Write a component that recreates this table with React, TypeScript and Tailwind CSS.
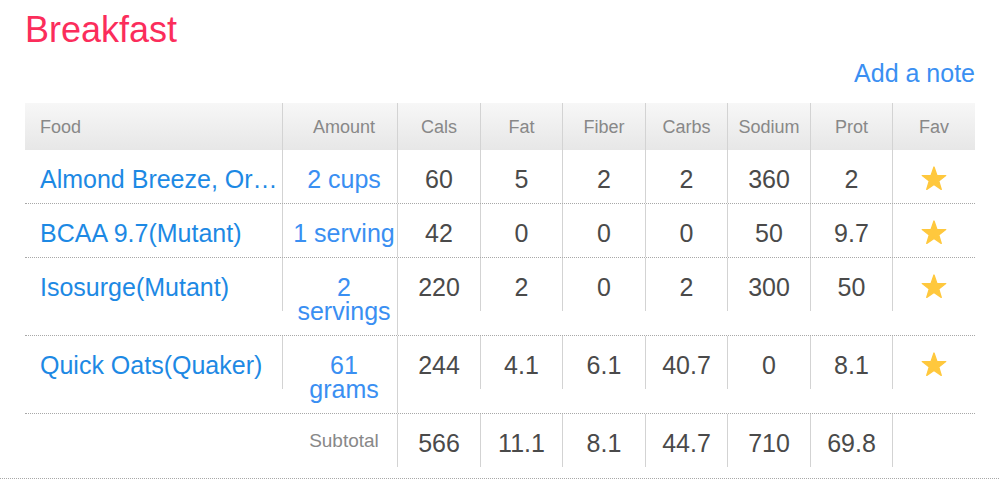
const rows = [
  { food: "Almond Breeze, Original Unsweetened", amount: "2 cups", cals: "60", fat: "5", fiber: "2", carbs: "2", sodium: "360", prot: "2" },
  { food: "BCAA 9.7(Mutant)", amount: "1 serving", cals: "42", fat: "0", fiber: "0", carbs: "0", sodium: "50", prot: "9.7" },
  { food: "Isosurge(Mutant)", amount: "2 servings", cals: "220", fat: "2", fiber: "0", carbs: "2", sodium: "300", prot: "50" },
  { food: "Quick Oats(Quaker)", amount: "61 grams", cals: "244", fat: "4.1", fiber: "6.1", carbs: "40.7", sodium: "0", prot: "8.1" },
];

const totals = ["566", "11.1", "8.1", "44.7", "710", "69.8"];

// widths of the six number columns, Cals..Prot
const numCols = ["w-[83px]", "w-[82px]", "w-[83px]", "w-[82px]", "w-[83px]", "w-[82px]"];
const numHeads = ["Cals", "Fat", "Fiber", "Carbs", "Sodium", "Prot"];

const Star = () => (
  <svg width="28" height="27" viewBox="0 0 24 24">
    <polygon
      points="12,1.8 14.59,9.24 22.46,9.4 16.18,14.16 18.47,21.7 12,17.2 5.53,21.7 7.82,14.16 1.54,9.4 9.41,9.24"
      fill="#ffc83d"
      stroke="#ffc83d"
      strokeWidth="1.2"
      strokeLinejoin="round"
    />
  </svg>
);

export default function App() {
  return (
    <div className="min-h-screen bg-white font-['Liberation_Sans',Arial,sans-serif]">
      <div className="pl-[25px] pr-[24px] pt-[12px]">
        <h1 className="text-[36px] leading-none text-[#fb2d5b]">Breakfast</h1>
        <div className="mt-[13px] flex justify-end">
          <a className="cursor-pointer text-[25px] leading-none text-[#3a8ff2]">Add a note</a>
        </div>

        <div className="mt-[17px]">
          {/* Header */}
          <div className="flex h-[47px] bg-linear-to-b from-[#f7f7f7] to-[#e7e7e7] text-[18px] text-[#888]">
            <div className="flex w-[258px] items-center border-r border-[#d3d3d3] pl-[15px] pt-[2px]">Food</div>
            <div className="flex w-[115px] items-center justify-center border-r border-[#d3d3d3] pl-[8px] pt-[2px]">Amount</div>
            {numHeads.map((h, i) => (
              <div key={h} className={`flex ${numCols[i]} items-center justify-center border-r border-[#d3d3d3] pt-[2px]`}>
                {h}
              </div>
            ))}
            <div className="flex w-[82px] items-center justify-center pt-[2px]">Fav</div>
          </div>

          {/* Food rows */}
          {rows.map((r) => {
            const nums = [r.cals, r.fat, r.fiber, r.carbs, r.sodium, r.prot];
            return (
              <div key={r.food} className="flex items-start border-b border-dotted border-[#a8a8a8] text-[25px] leading-[24px]">
                <div className="h-[53px] w-[258px] truncate border-r border-[#d3d3d3] pl-[15px] pt-[17px] text-[#1d89e4]">
                  {r.food}
                </div>
                <div className="min-h-[53px] w-[115px] border-r border-[#d3d3d3] pb-[12px] pl-[10px] pr-[2px] pt-[17px] text-center text-[#3a8ff2]">
                  {r.amount}
                </div>
                {nums.map((n, i) => (
                  <div key={i} className={`h-[53px] ${numCols[i]} border-r border-[#d3d3d3] pt-[17px] text-center text-[#4a4a4a]`}>
                    {n}
                  </div>
                ))}
                <div className="flex h-[53px] w-[82px] justify-center pt-[15px]">
                  <Star />
                </div>
              </div>
            );
          })}

          {/* Subtotal */}
          <div className="flex items-start text-[25px] leading-[24px]">
            <div className="h-[53px] w-[258px]" />
            <div className="h-[53px] w-[115px] border-r border-[#d3d3d3] pl-[10px] pr-[2px] pt-[15px] text-center text-[19px] text-[#888]">
              Subtotal
            </div>
            {totals.map((t, i) => (
              <div key={i} className={`h-[53px] ${numCols[i]} border-r border-[#d3d3d3] pt-[17px] text-center text-[#4a4a4a]`}>
                {t}
              </div>
            ))}
            <div className="h-[53px] w-[82px]" />
          </div>
        </div>
      </div>
      <div className="mt-[11px] border-t border-dotted border-[#a8a8a8]" />
    </div>
  );
}
